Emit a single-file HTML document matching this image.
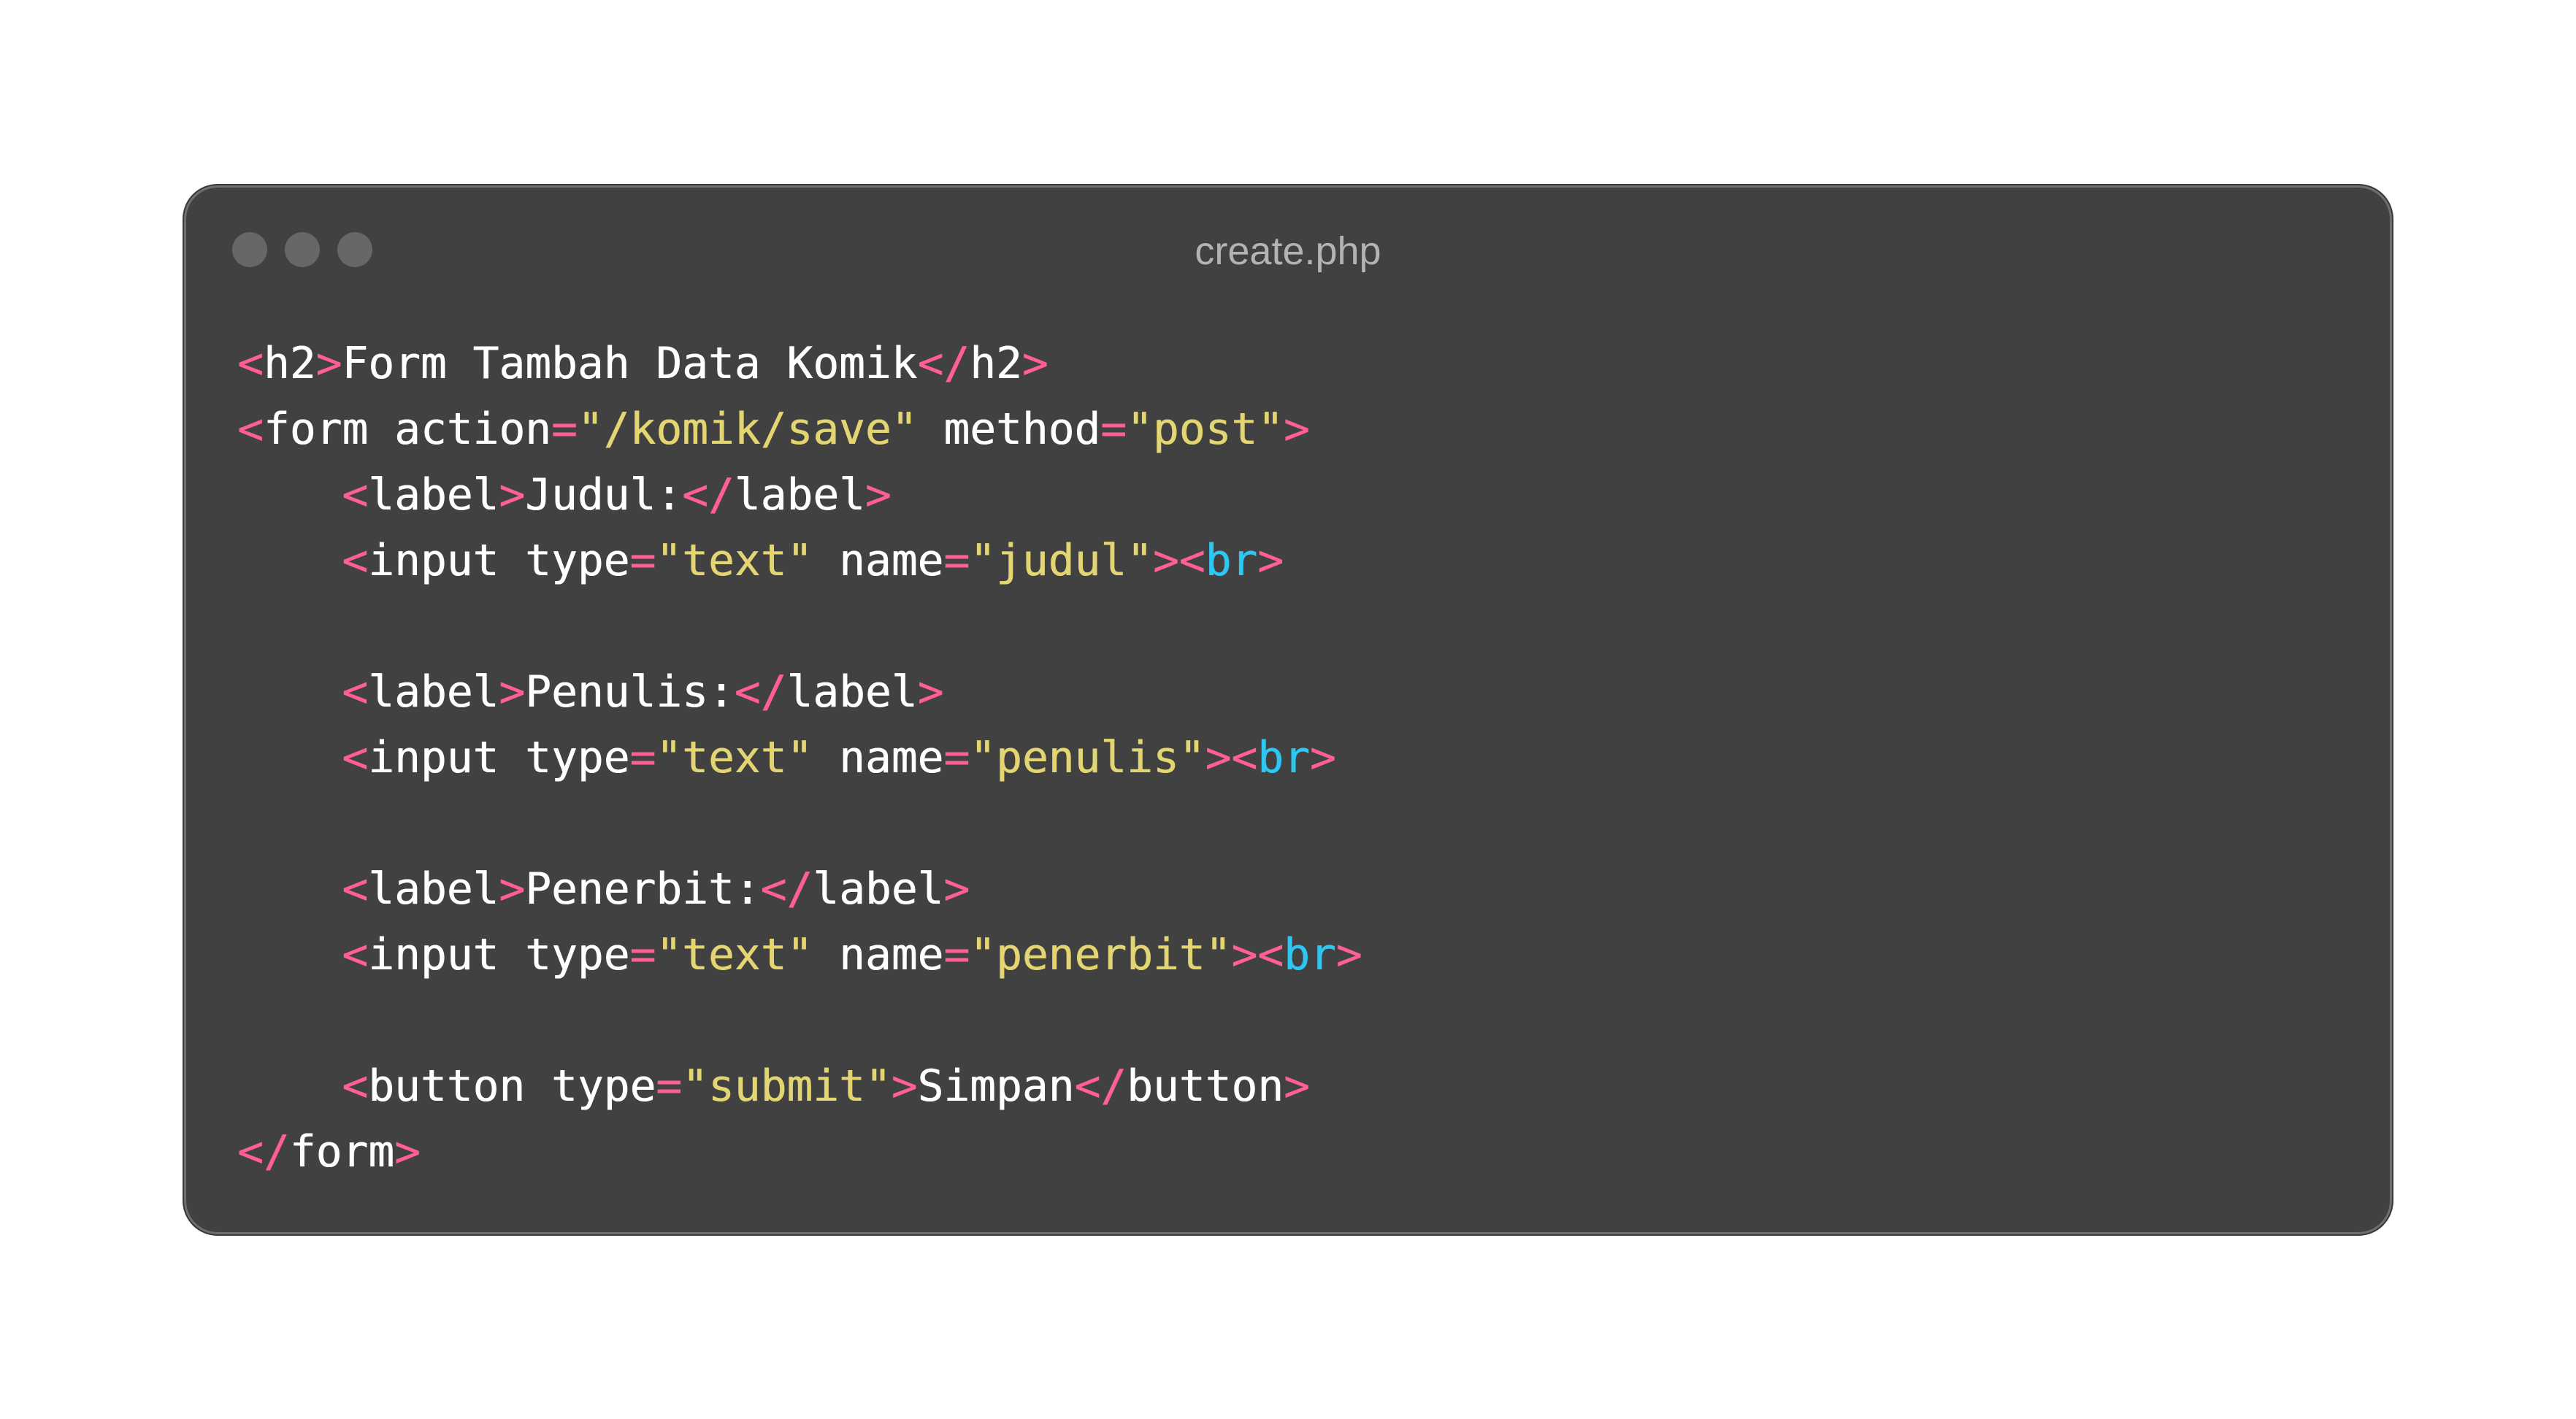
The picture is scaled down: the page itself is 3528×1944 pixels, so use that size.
<!DOCTYPE html>
<html><head><meta charset="utf-8"><style>
html,body{margin:0;padding:0;background:#fff;width:3528px;height:1944px;overflow:hidden}
.win{position:absolute;left:250px;top:252px;width:3028px;height:1441px;box-sizing:border-box;background:#414141;border-radius:48px;border:2px solid #3a3a3a;box-shadow:inset 0 0 0 3px #6f6f6f}
.dot{position:absolute;top:318px;width:48px;height:48px;border-radius:50%;background:#676767}
.title{position:absolute;left:0;width:3528px;top:314px;text-align:center;font-family:"Liberation Sans",sans-serif;font-size:54px;color:#b3b3b3;line-height:60px}
pre{position:absolute;left:325px;top:454px;margin:0;font-family:"DejaVu Sans Mono",monospace;font-size:59.5px;line-height:90px;color:#ffffff;text-shadow:0.6px 0 0 currentColor}
.p{color:#ff5f93}.y{color:#e2d572}.b{color:#2ec6f2}
</style></head><body>
<div class="win"></div>
<div class="dot" style="left:318px"></div>
<div class="dot" style="left:390px"></div>
<div class="dot" style="left:462px"></div>
<div class="title">create.php</div>
<pre><span class="p">&lt;</span>h2<span class="p">&gt;</span>Form Tambah Data Komik<span class="p">&lt;/</span>h2<span class="p">&gt;</span>
<span class="p">&lt;</span>form action<span class="p">=</span><span class="y">"/komik/save"</span> method<span class="p">=</span><span class="y">"post"</span><span class="p">&gt;</span>
    <span class="p">&lt;</span>label<span class="p">&gt;</span>Judul:<span class="p">&lt;/</span>label<span class="p">&gt;</span>
    <span class="p">&lt;</span>input type<span class="p">=</span><span class="y">"text"</span> name<span class="p">=</span><span class="y">"judul"</span><span class="p">&gt;&lt;</span><span class="b">br</span><span class="p">&gt;</span>

    <span class="p">&lt;</span>label<span class="p">&gt;</span>Penulis:<span class="p">&lt;/</span>label<span class="p">&gt;</span>
    <span class="p">&lt;</span>input type<span class="p">=</span><span class="y">"text"</span> name<span class="p">=</span><span class="y">"penulis"</span><span class="p">&gt;&lt;</span><span class="b">br</span><span class="p">&gt;</span>

    <span class="p">&lt;</span>label<span class="p">&gt;</span>Penerbit:<span class="p">&lt;/</span>label<span class="p">&gt;</span>
    <span class="p">&lt;</span>input type<span class="p">=</span><span class="y">"text"</span> name<span class="p">=</span><span class="y">"penerbit"</span><span class="p">&gt;&lt;</span><span class="b">br</span><span class="p">&gt;</span>

    <span class="p">&lt;</span>button type<span class="p">=</span><span class="y">"submit"</span><span class="p">&gt;</span>Simpan<span class="p">&lt;/</span>button<span class="p">&gt;</span>
<span class="p">&lt;/</span>form<span class="p">&gt;</span></pre>
</body></html>
